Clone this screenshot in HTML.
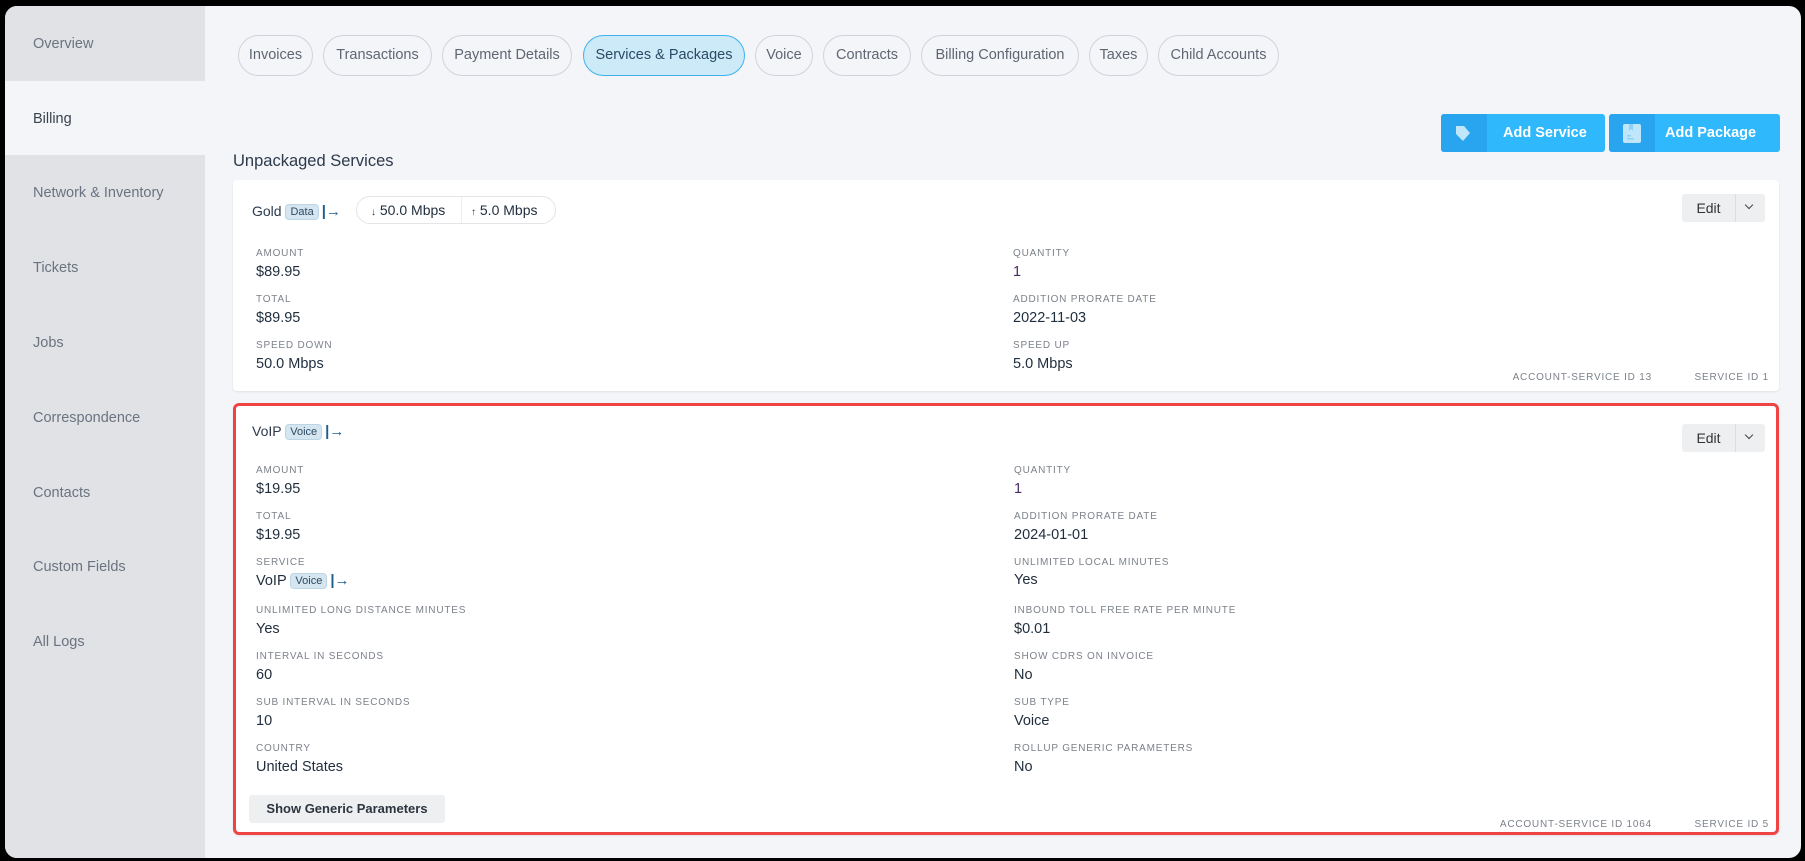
<!DOCTYPE html>
<html><head><meta charset="utf-8"><style>
*{box-sizing:border-box;margin:0;padding:0}
body{width:1805px;height:861px;background:#000;font-family:"Liberation Sans",sans-serif;overflow:hidden;position:relative}
.frame{position:absolute;left:5px;top:6px;width:1796px;height:852px;background:#f4f5f8;border-radius:12px;overflow:hidden}
.side{position:absolute;left:0;top:0;width:200px;height:852px;background:#e0e2e6}
.side div{position:absolute;left:28px;font-size:14.5px;color:#6b7380}
.side .act{left:0;width:200px;height:74px;background:#f4f5f8;top:75px}
.tab{position:absolute;top:29px;height:41px;border:1px solid #cfd3d9;border-radius:21px;font-size:14.5px;color:#5f6672;line-height:39px;text-align:center}
.tab.on{background:#cdeaf9;border-color:#3fb2ee;color:#2c4a63}
.btn{position:absolute;top:108px;height:38px;background:#2fb8fb;border-radius:3px;color:#fff;font-weight:bold;font-size:14.5px;line-height:38px;overflow:hidden}
.btn .ic{position:absolute;left:0;top:0;width:46px;height:38px;background:#29a5ef}
.card{position:absolute;left:228px;background:#fff;border-radius:4px;box-shadow:0 1px 2px rgba(0,0,0,.08);width:1546px}
.lab{position:absolute;font-size:10px;letter-spacing:0.8px;color:#7c828a;white-space:nowrap}
.val{position:absolute;font-size:14.5px;color:#1f2d3d;white-space:nowrap}
.edit{position:absolute;right:14px;width:83px;height:28px;background:#eeeff1;border-radius:3px;font-size:14px;color:#333;line-height:28px}
.edit span{position:absolute;left:0;width:53px;text-align:center}
.edit i{position:absolute;left:53px;top:0;width:1px;height:28px;background:#dcdde0}
.edit b{position:absolute;left:64px;top:8px;width:6px;height:6px;border-right:1.5px solid #444;border-bottom:1.5px solid #444;transform:rotate(45deg)}
.tag{display:inline-block;background:#d5e6f0;border:1px solid #bcd5e4;border-radius:4px;font-size:11px;color:#2c4a63;padding:1px 4px;vertical-align:1px}
.arr{display:inline-block;color:#1d5d8c;font-size:15px;font-weight:bold;margin-left:3px}
.foot{position:absolute;font-size:10px;letter-spacing:0.8px;color:#7c828a;white-space:nowrap}
</style></head><body><div class="frame">
<div class="side">
<div class="act"></div>
<div style="top:30px">Overview</div>
<div style="top:105px;color:#3a4250">Billing</div>
<div style="top:179px">Network &amp; Inventory</div>
<div style="top:254px">Tickets</div>
<div style="top:329px">Jobs</div>
<div style="top:404px">Correspondence</div>
<div style="top:479px">Contacts</div>
<div style="top:553px">Custom Fields</div>
<div style="top:628px">All Logs</div>
</div>
<div class="tab" style="left:233px;width:75px">Invoices</div>
<div class="tab" style="left:318px;width:109px">Transactions</div>
<div class="tab" style="left:437px;width:130px">Payment Details</div>
<div class="tab on" style="left:578px;width:162px">Services &amp; Packages</div>
<div class="tab" style="left:750px;width:58px">Voice</div>
<div class="tab" style="left:818px;width:88px">Contracts</div>
<div class="tab" style="left:916px;width:158px">Billing Configuration</div>
<div class="tab" style="left:1084px;width:59px">Taxes</div>
<div class="tab" style="left:1153px;width:121px">Child Accounts</div>
<div class="btn" style="left:1436px;width:164px"><div class="ic"><svg width="46" height="38"><path d="M15 12h8l6 7-7 8-7-7z" fill="#bfe6fb"/></svg></div><span style="position:absolute;left:62px">Add Service</span></div>
<div class="btn" style="left:1604px;width:171px"><div class="ic"><svg width="46" height="38"><rect x="14" y="10" width="18" height="19" rx="2" fill="#bfe6fb"/><path d="M20 10v7l2-2 2 2v-7" fill="#8fd0f5"/><rect x="18" y="21" width="4" height="1.5" fill="#8fd0f5"/><rect x="18" y="24" width="7" height="1.5" fill="#8fd0f5"/></svg></div><span style="position:absolute;left:56px">Add Package</span></div>
<div style="position:absolute;left:228px;top:146px;font-size:16.5px;color:#2c3a4c">Unpackaged Services</div>

<div class="card" style="top:174px;height:211px">
<div style="position:absolute;left:19px;top:23px;font-size:14px;color:#2c3a4c">Gold <span class="tag">Data</span><span class="arr">|→</span></div>
<div style="position:absolute;left:123px;top:16px;width:200px;height:28px;border:1px solid #e3e5e8;border-radius:14px;font-size:14px;color:#1f2d3d;line-height:26px"><span style="position:absolute;left:14px"><small style="font-size:10px">↓</small> 50.0 Mbps</span><i style="position:absolute;left:104px;top:0;width:1px;height:26px;background:#eee"></i><span style="position:absolute;left:114px"><small style="font-size:10px">↑</small> 5.0 Mbps</span></div>
<div class="edit" style="top:14px"><span>Edit</span><i></i><b></b></div>
<div class="lab" style="left:23px;top:68px">AMOUNT</div><div class="val" style="left:23px;top:84px">$89.95</div>
<div class="lab" style="left:23px;top:114px">TOTAL</div><div class="val" style="left:23px;top:130px">$89.95</div>
<div class="lab" style="left:23px;top:160px">SPEED DOWN</div><div class="val" style="left:23px;top:176px">50.0 Mbps</div>
<div class="lab" style="left:780px;top:68px">QUANTITY</div><div class="val" style="left:780px;top:84px;color:#4a2a6a">1</div>
<div class="lab" style="left:780px;top:114px">ADDITION PRORATE DATE</div><div class="val" style="left:780px;top:130px">2022-11-03</div>
<div class="lab" style="left:780px;top:160px">SPEED UP</div><div class="val" style="left:780px;top:176px">5.0 Mbps</div>
<div class="foot" style="right:127px;top:192px">ACCOUNT-SERVICE ID 13</div>
<div class="foot" style="right:10px;top:192px">SERVICE ID 1</div>
</div>

<div class="card" style="top:397px;height:432px;border:3px solid #f04444;border-radius:6px;left:228px">
<div style="position:absolute;left:16px;top:17px;font-size:14px;color:#2c3a4c">VoIP <span class="tag">Voice</span><span class="arr">|→</span></div>
<div class="edit" style="top:18px;right:11px"><span>Edit</span><i></i><b></b></div>
<div class="lab" style="left:20px;top:59px">AMOUNT</div><div class="val" style="left:20px;top:75px">$19.95</div>
<div class="lab" style="left:20px;top:105px">TOTAL</div><div class="val" style="left:20px;top:121px">$19.95</div>
<div class="lab" style="left:20px;top:151px">SERVICE</div><div class="val" style="left:20px;top:166px">VoIP <span class="tag">Voice</span><span class="arr">|→</span></div>
<div class="lab" style="left:20px;top:199px">UNLIMITED LONG DISTANCE MINUTES</div><div class="val" style="left:20px;top:215px">Yes</div>
<div class="lab" style="left:20px;top:245px">INTERVAL IN SECONDS</div><div class="val" style="left:20px;top:261px">60</div>
<div class="lab" style="left:20px;top:291px">SUB INTERVAL IN SECONDS</div><div class="val" style="left:20px;top:307px">10</div>
<div class="lab" style="left:20px;top:337px">COUNTRY</div><div class="val" style="left:20px;top:353px">United States</div>
<div class="lab" style="left:778px;top:59px">QUANTITY</div><div class="val" style="left:778px;top:75px;color:#4a2a6a">1</div>
<div class="lab" style="left:778px;top:105px">ADDITION PRORATE DATE</div><div class="val" style="left:778px;top:121px">2024-01-01</div>
<div class="lab" style="left:778px;top:151px">UNLIMITED LOCAL MINUTES</div><div class="val" style="left:778px;top:166px">Yes</div>
<div class="lab" style="left:778px;top:199px">INBOUND TOLL FREE RATE PER MINUTE</div><div class="val" style="left:778px;top:215px">$0.01</div>
<div class="lab" style="left:778px;top:245px">SHOW CDRS ON INVOICE</div><div class="val" style="left:778px;top:261px">No</div>
<div class="lab" style="left:778px;top:291px">SUB TYPE</div><div class="val" style="left:778px;top:307px">Voice</div>
<div class="lab" style="left:778px;top:337px">ROLLUP GENERIC PARAMETERS</div><div class="val" style="left:778px;top:353px">No</div>
<div style="position:absolute;left:13px;top:389px;width:196px;height:28px;background:#eeeff1;border-radius:3px;font-size:13px;font-weight:bold;color:#2c3440;line-height:28px;text-align:center">Show Generic Parameters</div>
<div class="foot" style="right:124px;top:413px">ACCOUNT-SERVICE ID 1064</div>
<div class="foot" style="right:7px;top:413px">SERVICE ID 5</div>
</div>
</div></body></html>
